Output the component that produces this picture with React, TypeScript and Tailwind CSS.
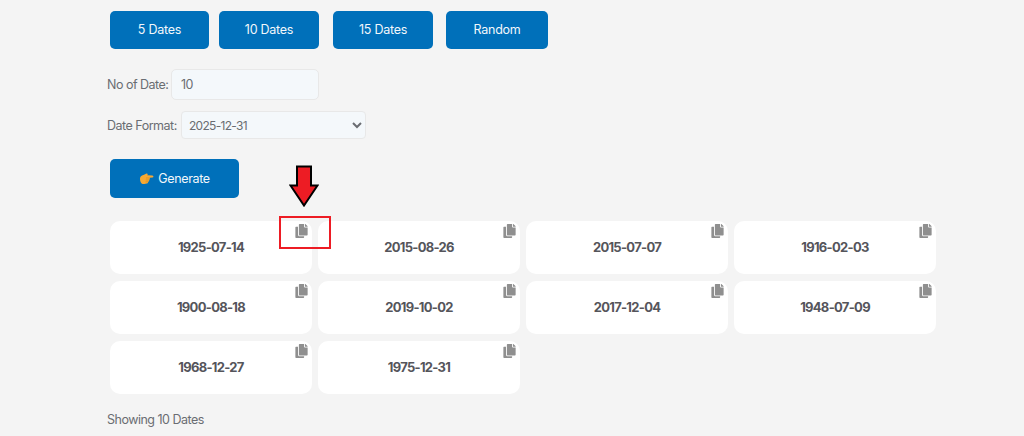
import { FaCopy } from "react-icons/fa";

const presets = [
  { label: "5 Dates", width: "w-[99px]", gap: "mr-[10px]" },
  { label: "10 Dates", width: "w-[100px]", gap: "mr-[14px]" },
  { label: "15 Dates", width: "w-[100px]", gap: "mr-[13px]" },
  { label: "Random", width: "w-[102px]", gap: "" },
];

const dates = [
  "1925-07-14",
  "2015-08-26",
  "2015-07-07",
  "1916-02-03",
  "1900-08-18",
  "2019-10-02",
  "2017-12-04",
  "1948-07-09",
  "1968-12-27",
  "1975-12-31",
];

function PointingHand() {
  return (
    <svg width="15" height="14" viewBox="0 0 15 14" className="mr-[4px]">
      <path
        d="M1 6.5 C1 4.5 3 3 5 2.8 L7.5 1.6 C8.6 1.2 9.2 2.4 8.2 3.2 L13.4 3.6 C14.8 3.8 14.8 5.6 13.4 5.6 L10.6 5.8 C11 6.8 10.8 7.5 10.2 8 C10.3 8.9 9.9 9.6 9.2 9.8 C9.2 11 8.4 11.6 7.6 11.6 L5.4 12 C2.6 12.6 1 10 1 6.5 Z"
        fill="#f7a934"
      />
      <path d="M7 6 L10.4 6 M6.8 8 L10 8 M6.6 9.8 L9 9.8" stroke="#d98a1c" strokeWidth="0.7" fill="none" />
    </svg>
  );
}

function DateCard({ value }: { value: string }) {
  return (
    <div className="relative flex h-[53px] items-center justify-center rounded-[10px] bg-white text-[13px] font-bold tracking-[-0.7px] text-[#55555b]">
      {value}
      <FaCopy className="absolute right-[4px] top-[3px] h-[14px] w-[13px] text-[#8f8f8f]" />
    </div>
  );
}

export default function App() {
  return (
    <div className="relative h-[436px] w-[1024px] overflow-hidden bg-[#f4f4f4] pl-[107px] font-['Inter',sans-serif] text-[12.5px] tracking-[-0.5px] text-[#6a6d72]">
      <div className="flex pl-[3px] pt-[11px]">
        {presets.map((preset) => (
          <button
            key={preset.label}
            className={`h-[38px] rounded-[5px] bg-[#0070ba] pt-[1px] text-[12.5px] tracking-[-0.25px] text-[#f2f7fb] ${preset.width} ${preset.gap}`}
          >
            {preset.label}
          </button>
        ))}
      </div>

      <div className="mt-[20px] flex items-center">
        <label className="w-[64px] whitespace-nowrap pt-[2px]">No of Date:</label>
        <input
          readOnly
          value="10"
          className="h-[31px] w-[148px] rounded-[5px] border border-[#e8e8e8] bg-[#f4f8fb] px-[9px] text-[12.5px] tracking-[-0.5px] text-[#6a6d72] outline-none"
        />
      </div>

      <div className="mt-[11px] flex items-center">
        <label className="w-[74px] whitespace-nowrap pt-[2px]">Date Format:</label>
        <select className="h-[28px] w-[185px] rounded-[4px] border border-[#e8e8e8] bg-[#f4f8fb] pl-[3px] text-[12px] tracking-[-0.7px] text-[#6a6d72] outline-none">
          <option>2025-12-31</option>
        </select>
      </div>

      <div className="pl-[3px] pt-[20px]">
        <button className="flex h-[39px] w-[129px] items-center justify-center rounded-[5px] bg-[#0070ba] pt-[1px] text-[12.5px] tracking-[-0.35px] text-[#f2f7fb]">
          <PointingHand />
          Generate
        </button>
      </div>

      <div className="ml-[3px] mt-[23px] grid w-[826px] grid-cols-4 gap-x-[6px] gap-y-[7px]">
        {dates.map((date) => (
          <DateCard key={date} value={date} />
        ))}
      </div>

      <p className="mt-[17px]">Showing 10 Dates</p>

      {/* annotation drawn over the page */}
      <svg width="30" height="42" viewBox="0 0 30 42" className="absolute left-[289px] top-[165px]">
        <path d="M8 1.5 H22 V20.5 H28.5 L15 40.5 L1.5 20.5 H8 Z" fill="#ed1c24" stroke="#000" strokeWidth="2" />
      </svg>
      <div className="absolute left-[279px] top-[216px] h-[33px] w-[52px] border-2 border-[#ed1c24]" />
    </div>
  );
}
